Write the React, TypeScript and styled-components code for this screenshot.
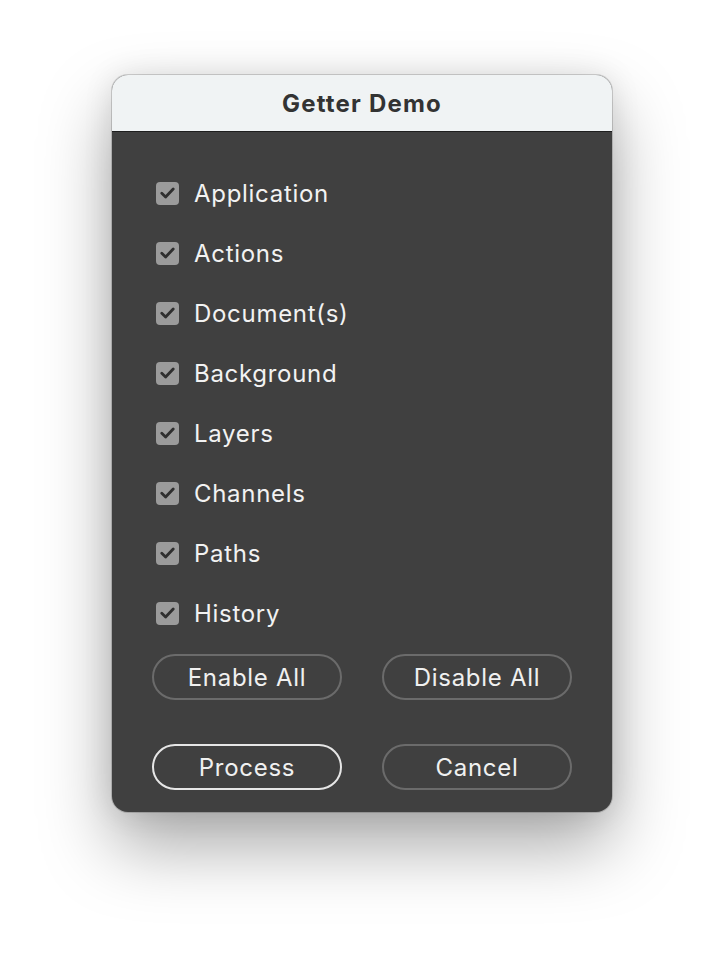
import React, { useState } from "react"
import styled, { createGlobalStyle } from "styled-components"

const GlobalStyle = createGlobalStyle`
  html, body {
    margin: 0;
    padding: 0;
    background: #ffffff;
  }
  body {
    font-family: Inter, "Open Sans", "Liberation Sans", sans-serif;
    -webkit-font-smoothing: antialiased;
  }
`

const Page = styled.div`
  width: 724px;
  height: 960px;
  display: flex;
  justify-content: center;
  align-items: flex-start;
  padding-top: 75px;
  box-sizing: border-box;
`

const Window = styled.div`
  width: 500px;
  border-radius: 16px;
  overflow: hidden;
  background: #404040;
  box-shadow: 0 0 0 1px rgba(0, 0, 0, 0.16), 0 34px 70px rgba(0, 0, 0, 0.34),
    0 0 30px rgba(0, 0, 0, 0.1);
`

const TitleBar = styled.div`
  height: 56px;
  background: #f0f3f4;
  border-bottom: 1px solid #1e1e1e;
  display: flex;
  align-items: center;
  justify-content: center;
`

const Title = styled.h1`
  margin: 0;
  font-size: 24px;
  font-weight: 700;
  color: #333333;
  letter-spacing: 1.2px;
`

const Body = styled.div`
  padding: 31px 40px 22px;
  display: flex;
  flex-direction: column;
`

const List = styled.div`
  display: flex;
  flex-direction: column;
  padding-left: 4px;
`

const Row = styled.label`
  height: 60px;
  display: flex;
  align-items: center;
  gap: 15px;
  cursor: default;
`

const Box = styled.span<{ $on: boolean }>`
  width: 23px;
  height: 23px;
  border-radius: 4px;
  background: ${(p) => (p.$on ? "#9b9b9b" : "#5a5a5a")};
  display: flex;
  align-items: center;
  justify-content: center;
  flex-shrink: 0;
`

const Label = styled.span`
  font-size: 24px;
  color: #f2f2f2;
  font-weight: 400;
  letter-spacing: 0.7px;
`

const ButtonRow = styled.div<{ $top: number }>`
  display: grid;
  grid-template-columns: 190px 190px;
  justify-content: space-between;
  margin-top: ${(p) => p.$top}px;
`

const Button = styled.button<{ $primary?: boolean }>`
  height: 46px;
  border-radius: 23px;
  background: transparent;
  border: 2px solid ${(p) => (p.$primary ? "#e6e6e6" : "#6b6b6b")};
  color: #f0f0f0;
  font-family: inherit;
  font-size: 24px;
  letter-spacing: 0.7px;
  padding: 0;
  cursor: default;
`

const items = [
  "Application",
  "Actions",
  "Document(s)",
  "Background",
  "Layers",
  "Channels",
  "Paths",
  "History",
]

function Check() {
  return (
    <svg width="15" height="12" viewBox="0 0 15 12" fill="none">
      <path
        d="M1.8 6.3 L5.6 10 L13.2 2"
        stroke="#2f2f2f"
        strokeWidth="2.8"
        strokeLinecap="round"
        strokeLinejoin="round"
      />
    </svg>
  )
}

export default function App() {
  const [checked, setChecked] = useState<boolean[]>(items.map(() => true))

  const toggle = (i: number) =>
    setChecked((c) => c.map((v, j) => (j === i ? !v : v)))

  return (
    <>
      <GlobalStyle />
      <Page>
        <Window>
          <TitleBar>
            <Title>Getter Demo</Title>
          </TitleBar>
          <Body>
            <List>
              {items.map((name, i) => (
                <Row key={name} onClick={() => toggle(i)}>
                  <Box $on={checked[i]}>{checked[i] && <Check />}</Box>
                  <Label>{name}</Label>
                </Row>
              ))}
            </List>
            <ButtonRow $top={11}>
              <Button onClick={() => setChecked(items.map(() => true))}>Enable All</Button>
              <Button onClick={() => setChecked(items.map(() => false))}>Disable All</Button>
            </ButtonRow>
            <ButtonRow $top={44}>
              <Button $primary>Process</Button>
              <Button>Cancel</Button>
            </ButtonRow>
          </Body>
        </Window>
      </Page>
    </>
  )
}
